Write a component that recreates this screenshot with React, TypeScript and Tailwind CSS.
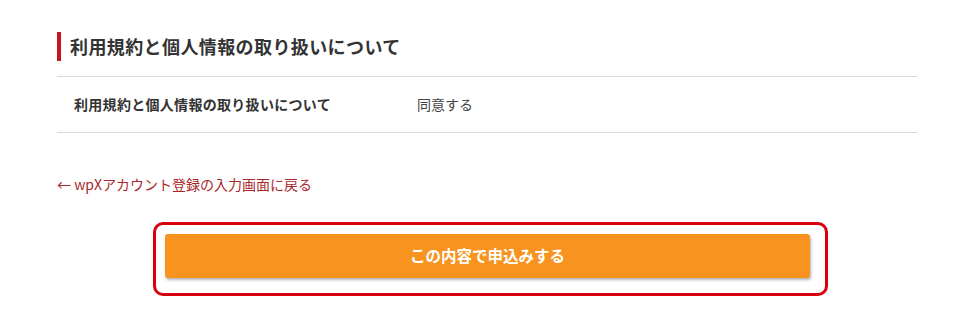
import React from "react";

export default function App() {
  return (
    <div
      className="w-[976px] h-[330px] bg-white text-[#333333] overflow-hidden"
      style={{ fontFamily: '"Noto Sans CJK JP", "Noto Sans", sans-serif' }}
    >
      <div className="ml-[57px] w-[860px] pt-[32px]">
        <h2 className="border-l-[4px] border-[#c4161c] pl-[9px] h-[29px] flex items-center text-[18px] tracking-[0.4px] font-bold leading-[29px] text-[#333333]">
          利用規約と個人情報の取り扱いについて
        </h2>
        <div className="mt-[15px] border-t border-b border-[#d9d9d9] h-[57px] flex items-center text-[14px]">
          <div className="pl-[17px] w-[360px] font-bold tracking-[0.3px]">利用規約と個人情報の取り扱いについて</div>
          <div className="text-[#444444]">同意する</div>
        </div>
        <div className="mt-[41px] h-[20px] flex items-center text-[14px] leading-[20px] text-[#a8282c]">
          ← wpXアカウント登録の入力画面に戻る
        </div>
        <div className="mt-[28px] ml-[96px] w-[675px] h-[74px] border-[3px] border-[#d7000f] rounded-[10px] pl-[9px] pt-[9px]">
          <button className="w-[645px] h-[44px] rounded-[3px] bg-[#f7931e] shadow-[1px_2px_3px_rgba(0,0,0,0.3)] text-white font-bold text-[15.5px] flex items-center justify-center">
            この内容で申込みする
          </button>
        </div>
      </div>
    </div>
  );
}
